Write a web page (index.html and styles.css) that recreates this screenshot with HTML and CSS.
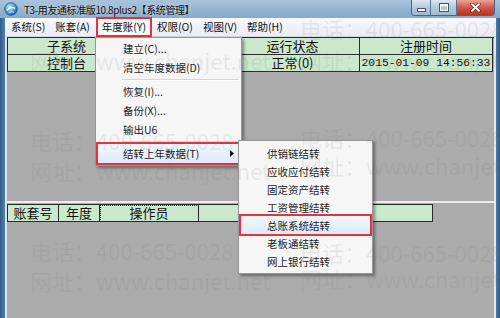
FILE: index.html
```html
<!DOCTYPE html>
<html lang="zh-CN">

<head>
  <meta charset="UTF-8">
  <title>T3-用友通标准版10.8plus2【系统管理】</title>
  <link rel="stylesheet" href="styles.css">
</head>

<body>
  <div class="window">
    <div class="titlebar">
      <svg class="app-icon" width="14" height="14" viewBox="0 0 14 14">
        <defs>
          <radialGradient id="globe" cx="40%" cy="35%" r="70%">
            <stop offset="0" stop-color="#d6f0ff" />
            <stop offset="0.55" stop-color="#4d9be0" />
            <stop offset="1" stop-color="#16589f" />
          </radialGradient>
        </defs>
        <circle cx="7" cy="7" r="6.3" fill="url(#globe)" stroke="#1d4f86" stroke-width="0.7" />
        <path d="M2.8 8.6c1.6-2.8 5.6-4 8.4-2.2" stroke="#fff" stroke-width="1.3" fill="none" />
        <path d="M4.5 11c1.5-1.2 3.6-1.6 5.4-0.8" stroke="#e8f6ff" stroke-width="0.9" fill="none" />
      </svg>
      <span class="title">T3-用友通标准版10.8plus2【系统管理】</span>
      <div class="win-btns">
        <div class="btn btn-min"><span class="glyph-min"></span></div>
        <div class="btn btn-max"><span class="glyph-max"></span></div>
        <div class="btn btn-close">
          <svg width="11" height="9" viewBox="0 0 11 9">
            <path d="M2 1.2 L9 7.8 M9 1.2 L2 7.8" stroke="#5a1a10" stroke-width="3.2" stroke-linecap="round" />
            <path d="M2 1.2 L9 7.8 M9 1.2 L2 7.8" stroke="#fff" stroke-width="2" stroke-linecap="round" />
          </svg>
        </div>
      </div>
    </div>

    <div class="frame">
      <div class="menubar">
        <span class="menu-item">系统(S)</span>
        <span class="menu-item">账套(A)</span>
        <span class="menu-item active">年度账(Y)</span>
        <span class="menu-item">权限(O)</span>
        <span class="menu-item">视图(V)</span>
        <span class="menu-item">帮助(H)</span>
      </div>

      <div class="client">
        <div class="upper">
          <div class="grid grid-top">
            <div class="cell head">子系统</div>
            <div class="cell head">站点</div>
            <div class="cell head">运行状态</div>
            <div class="cell head">注册时间</div>
            <div class="cell">控制台</div>
            <div class="cell">(本地)</div>
            <div class="cell">正常(0)</div>
            <div class="cell mono">2015-01-09 14:56:33</div>
          </div>
        </div>
        <div class="splitter"></div>
        <div class="grid grid-bottom">
          <div class="cell head">账套号</div>
          <div class="cell head">年度</div>
          <div class="cell head focus">操作员</div>
          <div class="cell head"></div>
        </div>
      </div>
    </div>

    <!-- 年度账 dropdown -->
    <div class="dropdown">
      <div class="dd-item">建立(C)...</div>
      <div class="dd-item">清空年度数据(D)</div>
      <div class="dd-sep"></div>
      <div class="dd-item">恢复(I)...</div>
      <div class="dd-item">备份(X)...</div>
      <div class="dd-item">输出U6</div>
      <div class="dd-sep"></div>
      <div class="dd-item hot">结转上年数据(T)
        <svg class="arrow" width="4" height="7" viewBox="0 0 4 7"><path d="M0 0 L4 3.5 L0 7 Z" fill="#111" /></svg>
      </div>
    </div>

    <div class="submenu">
      <div class="dd-item">供销链结转</div>
      <div class="dd-item">应收应付结转</div>
      <div class="dd-item">固定资产结转</div>
      <div class="dd-item">工资管理结转</div>
      <div class="dd-item hot">总账系统结转</div>
      <div class="dd-item">老板通结转</div>
      <div class="dd-item">网上银行结转</div>
    </div>

    <div class="watermark">
      <span class="wm" style="left: 300px; top: 13px;">电话：400-665-0028</span>
      <span class="wm" style="left: 30px; top: 45px;">网址：www.chanjet.net</span>
      <span class="wm" style="left: 300px; top: 45px;">网址：www.chanjet.net</span>
      <span class="wm" style="left: 30px; top: 125px;">电话：400-665-0028</span>
      <span class="wm" style="left: 30px; top: 155px;">网址：www.chanjet.net</span>
      <span class="wm" style="left: 300px; top: 122px;">电话：400-665-0028</span>
      <span class="wm" style="left: 300px; top: 150px;">网址：www.chanjet.net</span>
      <span class="wm" style="left: 30px; top: 235px;">电话：400-665-0028</span>
      <span class="wm" style="left: 30px; top: 265px;">网址：www.chanjet.net</span>
      <span class="wm" style="left: 300px; top: 237px;">电话：400-665-0028</span>
      <span class="wm" style="left: 300px; top: 263px;">网址：www.chanjet.net</span>
    </div>
  </div>
</body>

</html>
```

FILE: styles.css
```css
body {
  margin: 0;
  font-family: "Noto Sans CJK SC", "Liberation Sans", sans-serif;
  background-color: #ababab;
}

.window {
  position: relative;
  width: 500px;
  height: 318px;
  overflow: hidden;
  display: flex;
  flex-direction: column;
  background: linear-gradient(90deg, #2f5c86 0, #4f7ca6 4px, #4f7ca6 496px, #2f5c86 500px);
}

/* title bar */
.titlebar {
  height: 18px;
  display: flex;
  align-items: center;
  padding-left: 4px;
  background: linear-gradient(#a9c3dc, #87a8c9);
}

.app-icon {
  margin-right: 6px;
}

.title {
  font-size: 10px;
  letter-spacing: -0.4px;
  color: #101010;
  text-shadow: 0 0 4px rgba(255, 255, 255, 0.7);
}

.win-btns {
  margin-left: auto;
  margin-right: 5px;
  align-self: flex-start;
  display: flex;
  height: 15px;
  border: 1px solid #4a6482;
  border-top: none;
  border-radius: 0 0 4px 4px;
  overflow: hidden;
}

.btn {
  display: flex;
  align-items: center;
  justify-content: center;
  background: linear-gradient(#dce7f2, #b3c8de 50%, #9fb8d3);
  border-right: 1px solid #5a7391;
}

.btn-min {
  width: 18px;
}

.btn-max {
  width: 25px;
}

.btn-close {
  width: 37px;
  border-right: none;
  background: linear-gradient(#e9a596, #d0584a 50%, #b8341f);
}

.glyph-min {
  width: 7px;
  height: 2px;
  margin-top: 5px;
  background-color: #fff;
  border: 1px solid #3d5570;
}

.glyph-max {
  width: 6px;
  height: 4px;
  border: 1px solid #fff;
  border-top-width: 2px;
  outline: 1px solid #3d5570;
}

/* frame + menu bar */
.frame {
  flex: 1;
  display: flex;
  flex-direction: column;
  margin: 0 4px 0 5px;
}

.menubar {
  height: 18px;
  display: flex;
  align-items: center;
  background: linear-gradient(#f7f8fc, #e9ecf5);
  border-bottom: 1px solid #d2d7e2;
}

.menu-item {
  padding: 0 5px;
  font-size: 10.5px;
  line-height: 16px;
  color: #111;
}

.menu-item:first-child {
  padding-left: 6px;
}

.menu-item.active {
  margin: 0 2px 0 3px;
  padding: 0 4px;
  background-color: #f8f8f8;
  outline: 2px solid #e2343a;
  outline-offset: 0;
}

/* client area */
.client {
  flex: 1;
  display: flex;
  flex-direction: column;
  background-color: #ababab;
  border-left: 2px solid #dfe5ec;
  border-right: 2px solid #e4e7eb;
}

.upper {
  height: 164px;
}

.grid {
  display: grid;
  border-top: 1px solid #2a2a2a;
  border-left: 1px solid #2a2a2a;
  align-self: flex-start;
}

.grid-top {
  grid-template-columns: 118px 100px 134px 133px;
}

.grid-bottom {
  grid-template-columns: 51px 41px 99px 234px;
}

.cell {
  height: 16px;
  line-height: 16px;
  font-size: 13px;
  text-align: center;
  color: #111;
  background-color: #cce8cc;
  border-right: 1px solid #2a2a2a;
  border-bottom: 1px solid #2a2a2a;
  white-space: nowrap;
  overflow: hidden;
}

.mono {
  font-family: "Liberation Mono", "DejaVu Sans Mono", monospace;
  font-size: 11.3px;
}

.focus {
  outline: 1px dotted #222;
  outline-offset: -1px;
}

.splitter {
  height: 2px;
  margin-bottom: 1px;
  background-color: #ececec;
}

/* menus */
.dropdown,
.submenu {
  position: absolute;
  background-color: #f6f6f6;
  border: 1px solid #979797;
  box-shadow: 2px 2px 3px rgba(0, 0, 0, 0.4);
  z-index: 5;
}

.dropdown {
  left: 95px;
  top: 37px;
  width: 145px;
  padding: 1px 0 2px;
}

.submenu {
  left: 238px;
  top: 140px;
  width: 133px;
  padding: 3px 0;
}

.dd-item {
  display: flex;
  align-items: center;
  height: 19px;
  padding-left: 27px;
  font-size: 10.5px;
  color: #1a1a1a;
}

.submenu .dd-item {
  height: 18px;
  padding-left: 28px;
}

.dd-item.hot {
  margin: 0 2px;
  padding-left: 25px;
  background: linear-gradient(#f3f7fd, #dde9fa);
  outline: 2px solid #e2343a;
}

.submenu .dd-item.hot {
  padding-left: 26px;
}

.arrow {
  margin-left: auto;
  margin-right: 5px;
}

.dd-sep {
  margin: 2px 2px 1px 26px;
  border-top: 1px solid #d5d5d5;
  border-bottom: 1px solid #fff;
}

/* watermark over everything */
.watermark {
  position: absolute;
  inset: 0;
  pointer-events: none;
  z-index: 10;
}

.wm {
  position: absolute;
  font-size: 22px;
  line-height: 30px;
  white-space: nowrap;
  color: rgba(110, 110, 110, 0.12);
}
```
